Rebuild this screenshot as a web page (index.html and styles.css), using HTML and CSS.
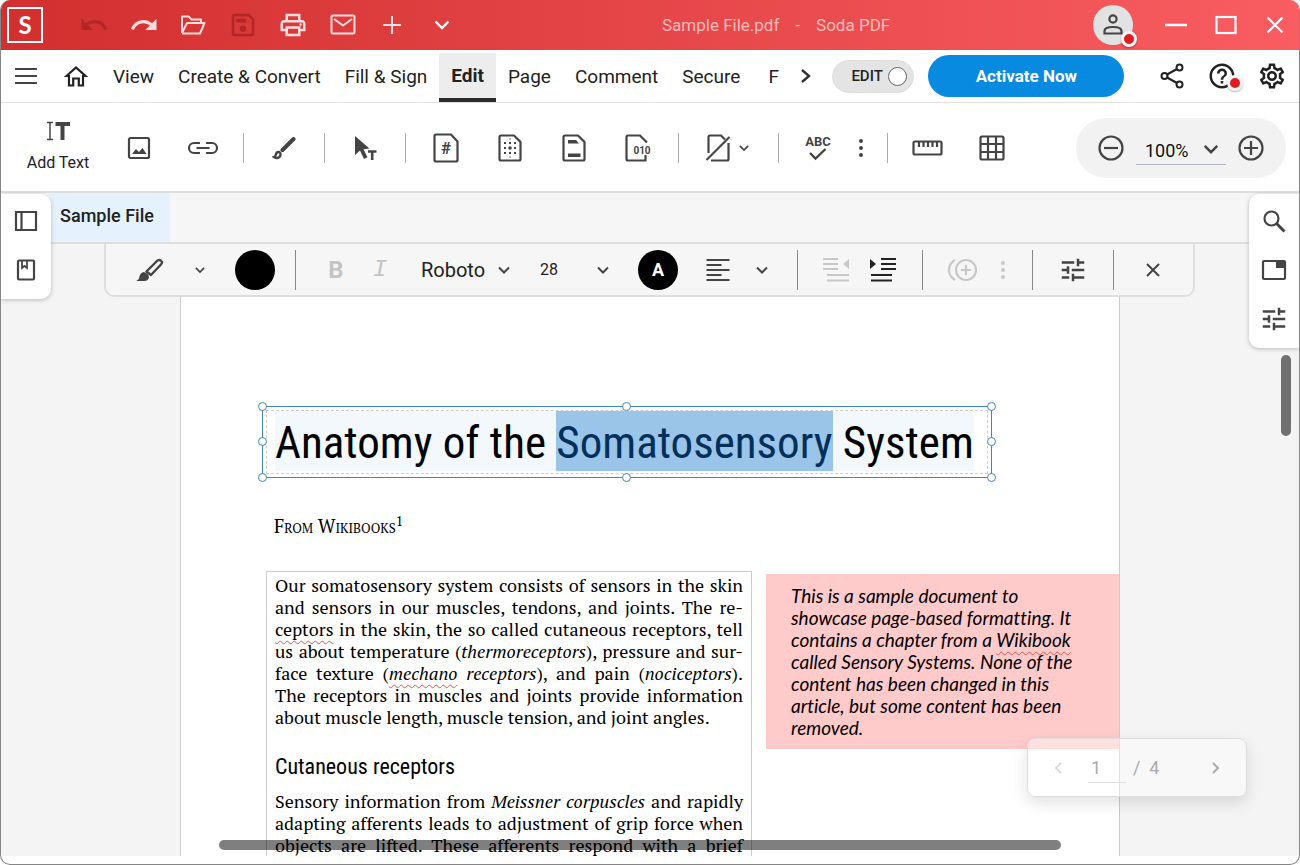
FILE: index.html
```html
<!DOCTYPE html>
<html lang="en">
<head>
<meta charset="utf-8">
<title>Sample File.pdf - Soda PDF</title>
<link rel="stylesheet" href="styles.css">
</head>
<body>
<svg class="sprite" aria-hidden="true">
  <symbol id="chevron" viewBox="0 0 12 8"><path d="M1 1.5 6 6.5l5-5" fill="none" stroke="currentColor" stroke-width="2"/></symbol>
  <symbol id="tune" viewBox="0 0 24 24"><path fill="currentColor" d="M3 17v2h6v-2H3zM3 5v2h10V5H3zm10 16v-2h8v-2h-8v-2h-2v6h2zM7 9v2H3v2h4v2h2V9H7zm14 4v-2H11v2h10zm-6-4h2V7h4V5h-4V3h-2v6z"/></symbol>
  <symbol id="dots" viewBox="0 0 6 20"><g fill="currentColor"><circle cx="3" cy="3" r="2"/><circle cx="3" cy="10" r="2"/><circle cx="3" cy="17" r="2"/></g></symbol>
</svg>
<div class="window">
  <header class="titlebar">
    <div class="logo">S</div>
    <div class="quick">
      <button class="icon-btn dim" aria-label="Undo"><svg width="30" height="30" viewBox="0 0 24 24"><path fill="currentColor" d="M12.5 8c-2.65 0-5.05.99-6.9 2.6L2 7v9h9l-3.62-3.62c1.39-1.16 3.16-1.88 5.12-1.88 3.54 0 6.55 2.31 7.6 5.5l2.37-.78C21.08 11.03 17.15 8 12.5 8z"/></svg></button>
      <button class="icon-btn" aria-label="Redo"><svg width="30" height="30" viewBox="0 0 24 24"><path fill="currentColor" d="M18.4 10.6C16.55 8.99 14.15 8 11.5 8c-4.65 0-8.58 3.03-9.96 7.22L3.9 16c1.05-3.19 4.05-5.5 7.6-5.5 1.95 0 3.73.72 5.12 1.88L13 16h9V7l-3.6 3.6z"/></svg></button>
      <button class="icon-btn" aria-label="Open"><svg width="26" height="20" viewBox="0 0 26 20"><path fill="none" stroke="currentColor" stroke-width="2" stroke-linejoin="round" d="M2 18V1.500h6.500l3 3H21V8M2 18 7 8h17.500l-4.500 10.500H2"/></svg></button>
      <button class="icon-btn dim" aria-label="Save"><svg width="30" height="30" viewBox="0 0 24 24"><path fill="currentColor" d="M17 3H5c-1.110 0-2 .9-2 2v14c0 1.100.89 2 2 2h14c1.100 0 2-.9 2-2V7l-4-4zm2 16H5V5h11.170L19 7.830V19zM6.500 7h8v3h-8z"/><circle cx="12" cy="15" r="2.600" fill="currentColor"/></svg></button>
      <button class="icon-btn" aria-label="Print"><svg width="30" height="30" viewBox="0 0 24 24"><path fill="currentColor" d="M19 8h-1V3H6v5H5c-1.660 0-3 1.340-3 3v6h4v4h12v-4h4v-6c0-1.660-1.340-3-3-3zM8 5h8v3H8V5zm8 12v2H8v-4h8v2zm2-2v-2H6v2H4v-4c0-.55.45-1 1-1h14c.55 0 1 .45 1 1v4h-2z"/><circle cx="18" cy="11.500" r="1" fill="currentColor"/></svg></button>
      <button class="icon-btn" aria-label="Mail"><svg width="26" height="22" viewBox="0 0 26 22"><g fill="none" stroke="currentColor" stroke-width="2"><rect x="1.500" y="1.500" width="23" height="18" rx="1.500"/><path d="m4 5 9 6.500L22 5"/></g></svg></button>
      <button class="icon-btn" aria-label="Add"><svg width="20" height="20" viewBox="0 0 20 20"><path d="M10 1v18M1 10h18" stroke="currentColor" stroke-width="2"/></svg></button>
      <button class="icon-btn bright" aria-label="More"><svg width="16" height="10" viewBox="0 0 16 10"><path d="m1.500 1.500 6.500 6.500 6.500-6.500" fill="none" stroke="currentColor" stroke-width="2.400"/></svg></button>
    </div>
    <div class="doc-title"><span>Sample File.pdf</span><span>-</span><span>Soda PDF</span></div>
    <div class="window-controls">
      <button class="avatar" aria-label="Account"><svg width="20" height="24" viewBox="0 0 20 24"><g fill="none" stroke="#444" stroke-width="2.200"><circle cx="10" cy="6" r="3.600"/><path d="M1.500 20.500v-2.500c0-2.500 3-4 8.500-4s8.500 1.500 8.500 4v2.500z"/></g></svg><span class="badge"></span></button>
      <button class="icon-btn bright" aria-label="Minimize"><svg width="24" height="20" viewBox="0 0 24 20"><path d="M1 10h22" stroke="currentColor" stroke-width="2.500"/></svg></button>
      <button class="icon-btn bright" aria-label="Maximize"><svg width="22" height="20" viewBox="0 0 22 20"><rect x="1.500" y="2" width="19" height="16" fill="none" stroke="currentColor" stroke-width="2.200"/></svg></button>
      <button class="icon-btn bright" aria-label="Close"><svg width="18" height="18" viewBox="0 0 18 18"><path d="m1.500 1.500 15 15m0-15-15 15" stroke="currentColor" stroke-width="2.200"/></svg></button>
    </div>
  </header>

  <nav class="menubar">
    <button class="menu-icon" aria-label="Menu"><svg width="24" height="18" viewBox="0 0 24 18"><path d="M1 2h22M1 9h22M1 16h22" stroke="currentColor" stroke-width="2"/></svg></button>
    <button class="menu-icon" aria-label="Home"><svg width="24" height="24" viewBox="0 0 24 24"><path d="M2.500 12 12 3.500l9.500 8.500H19v9.500h-4.200v-7H9.200v7H5V12z" fill="none" stroke="#222" stroke-width="2.200"/></svg></button>
    <button class="menu">View</button>
    <button class="menu">Create &amp; Convert</button>
    <button class="menu">Fill &amp; Sign</button>
    <button class="menu active">Edit</button>
    <button class="menu">Page</button>
    <button class="menu">Comment</button>
    <button class="menu">Secure</button>
    <button class="menu clipped">F</button>
    <button class="menu-next" aria-label="More tabs"><svg width="12" height="18" viewBox="0 0 12 18"><path d="m2 3 7 6-7 6" fill="none" stroke="#333" stroke-width="2.400"/></svg></button>
    <label class="toggle"><span>EDIT</span><input type="checkbox"></label>
    <button class="activate">Activate Now</button>
    <div class="menu-tools">
      <button class="icon-btn" aria-label="Share"><svg width="24" height="26" viewBox="0 0 24 26"><g fill="none" stroke="currentColor" stroke-width="2"><circle cx="19.500" cy="4.500" r="3"/><circle cx="4.500" cy="13" r="3"/><circle cx="19.500" cy="21.500" r="3"/><path d="m7 11.500 10-5.500M7 14.500 17 20"/></g></svg></button>
      <button class="icon-btn help" aria-label="Help"><svg width="30" height="30" viewBox="0 0 24 24"><path fill="currentColor" d="M11 18h2v-2h-2v2zm1-16C6.480 2 2 6.480 2 12s4.480 10 10 10 10-4.480 10-10S17.520 2 12 2zm0 18c-4.410 0-8-3.590-8-8s3.590-8 8-8 8 3.590 8 8-3.590 8-8 8zm0-14c-2.210 0-4 1.790-4 4h2c0-1.100.9-2 2-2s2 .9 2 2c0 2-3 1.750-3 5h2c0-2.250 3-2.500 3-5 0-2.210-1.790-4-4-4z"/></svg><span class="badge"></span></button>
      <button class="icon-btn" aria-label="Settings"><svg width="30" height="30" viewBox="0 0 24 24"><path fill="currentColor" d="M19.430 12.980c.04-.32.07-.64.07-.98 0-.34-.03-.66-.07-.98l2.110-1.650c.19-.15.24-.42.12-.64l-2-3.460c-.09-.16-.26-.25-.44-.25-.06 0-.12.01-.17.03l-2.490 1c-.52-.4-1.080-.73-1.690-.98l-.38-2.650C14.460 2.180 14.250 2 14 2h-4c-.25 0-.46.18-.49.42l-.38 2.650c-.61.25-1.170.59-1.690.98l-2.490-1c-.06-.02-.12-.03-.18-.03-.17 0-.34.09-.43.25l-2 3.460c-.13.22-.07.49.12.64l2.110 1.650c-.04.32-.07.65-.07.98 0 .33.03.66.07.98l-2.110 1.650c-.19.15-.24.42-.12.64l2 3.460c.09.16.26.25.44.25.06 0 .12-.01.17-.03l2.490-1c.52.4 1.080.73 1.690.98l.38 2.650c.03.24.24.42.49.42h4c.25 0 .46-.18.49-.42l.38-2.650c.61-.25 1.170-.59 1.690-.98l2.490 1c.06.02.12.03.18.03.17 0 .34-.09.43-.25l2-3.460c.12-.22.07-.49-.12-.64l-2.110-1.650zm-1.980-1.710c.04.31.05.52.05.73 0 .21-.02.43-.05.73l-.14 1.130.89.7 1.080.84-.7 1.210-1.270-.51-1.040-.42-.9.68c-.43.32-.84.56-1.250.73l-1.060.43-.16 1.130-.2 1.350h-1.400l-.19-1.350-.16-1.130-1.060-.43c-.43-.18-.83-.41-1.230-.71l-.91-.7-1.060.43-1.270.51-.7-1.210 1.080-.84.89-.7-.14-1.130c-.03-.31-.05-.54-.05-.74s.02-.43.05-.73l.14-1.130-.89-.7-1.080-.84.7-1.210 1.270.51 1.040.42.9-.68c.43-.32.84-.56 1.250-.73l1.060-.43.16-1.130.2-1.350h1.390l.19 1.350.16 1.130 1.060.43c.43.18.83.41 1.230.71l.91.7 1.060-.43 1.270-.51.7 1.210-1.070.85-.89.7.14 1.130zM12 8c-2.210 0-4 1.790-4 4s1.790 4 4 4 4-1.790 4-4-1.790-4-4-4zm0 6c-1.100 0-2-.9-2-2s.9-2 2-2 2 .9 2 2-.9 2-2 2z"/></svg></button>
    </div>
  </nav>

  <div class="ribbon">
    <button class="add-text"><svg width="24" height="20" viewBox="0 0 24 20" fill="none" stroke="currentColor"><path d="M1 1.500h6M1 18.500h6M4 1.500v17" stroke-width="1.500"/><path d="M9.500 3H24M16.500 3v16" stroke-width="4"/></svg><span>Add Text</span></button>
    <button class="tool" aria-label="Image"><svg width="24" height="24" viewBox="0 0 24 24"><rect x="2" y="2" width="20" height="20" rx="1.500" fill="none" stroke="currentColor" stroke-width="2.200"/><path fill="currentColor" d="m5 18 4-5 3 3 3.500-4L19.500 18z"/></svg></button>
    <button class="tool" aria-label="Link"><svg width="32" height="16" viewBox="0 0 32 16"><path d="M13 3H7a5 5 0 0 0 0 10h6M19 3h6a5 5 0 0 1 0 10h-6M9.500 8h13" fill="none" stroke="currentColor" stroke-width="2.200"/></svg></button>
    <span class="sep"></span>
    <button class="tool" aria-label="Brush"><svg width="24" height="24" viewBox="0 0 24 24"><path d="M21.500 3 10.500 14" stroke="currentColor" stroke-width="4" stroke-linecap="round"/><path d="M6.500 16c3 0 2.800 5.500-1.500 6-1.500 0-2.500-.3-3-.8 1.500-.5 1.700-1.500 2-3 .3-1.300 1.200-2.200 2.500-2.200z" fill="none" stroke="currentColor" stroke-width="2.400"/></svg></button>
    <span class="sep"></span>
    <button class="tool" aria-label="Select text"><svg width="24" height="26" viewBox="0 0 24 26"><path d="M2 1v19l5-4.500L11 24l3.500-1.800-4-8 6-.7z" fill="currentColor"/><path d="M15 16.500h8.500M19.200 17v8" stroke="currentColor" stroke-width="2.600"/></svg></button>
    <span class="sep"></span>
    <button class="tool" aria-label="Page number"><svg width="26" height="30" viewBox="0 0 26 30"><path class="ln" d="M3 1.500h15l6.500 7V27q0 1.500-1.500 1.500H3q-1.500 0-1.500-1.500V3q0-1.500 1.500-1.500z"/><text x="13" y="21" font-size="17" font-weight="700" text-anchor="middle">#</text></svg></button>
    <button class="tool" aria-label="Watermark"><svg width="24" height="28" viewBox="0 0 24 28"><path class="ln" d="M3 1.500h13l6.500 6.500V25q0 1.500-1.500 1.500H3q-1.500 0-1.500-1.500V3q0-1.500 1.500-1.500z"/><g stroke="currentColor" stroke-width="2" stroke-dasharray="2 3"><path d="M6 9h13M6 14h13M6 19h13"/></g><circle cx="12" cy="14" r="1.800" fill="currentColor"/><path d="M12 4.500v1M12 22.500v1" stroke="currentColor" stroke-width="1.500"/></svg></button>
    <button class="tool" aria-label="Header and footer"><svg width="24" height="28" viewBox="0 0 24 28"><path class="ln" d="M3 1.500h13l6.500 6.500V25q0 1.500-1.500 1.500H3q-1.500 0-1.500-1.500V3q0-1.500 1.500-1.500z"/><path fill="currentColor" d="M6 6h8l3 3.500H6zM6 19.500h12.500V23H6z"/></svg></button>
    <button class="tool" aria-label="Bates numbering"><svg width="26" height="28" viewBox="0 0 26 28"><path class="ln" d="M22 8.500 15 1.500H3Q1.500 1.500 1.500 3v22q0 1.500 1.500 1.500h17.500V21"/><text x="17" y="19.500" font-size="10" font-weight="700" text-anchor="middle">010</text></svg></button>
    <span class="sep"></span>
    <button class="tool split" aria-label="Remove marks"><svg width="26" height="28" viewBox="0 0 26 28"><path class="ln" d="M3.500 19V3q0-1.500 1.500-1.500h11l4 4M23.500 9v16q0 1.500-1.500 1.500H6"/><path d="m1.500 26 23-23" stroke="currentColor" stroke-width="2.200"/></svg><svg width="10" height="8" viewBox="0 0 12 8"><use href="#chevron"/></svg></button>
    <span class="sep"></span>
    <div class="spell">
      <button class="icon-btn" aria-label="Spell check"><svg width="28" height="28" viewBox="0 0 28 28"><text x="14" y="12" font-size="13" font-weight="700" text-anchor="middle">ABC</text><path d="m6 19 5.500 5.500L21.500 15" fill="none" stroke="currentColor" stroke-width="2.400"/></svg></button>
      <button class="icon-btn" aria-label="More"><svg width="6" height="20"><use href="#dots"/></svg></button>
    </div>
    <span class="sep"></span>
    <button class="tool" aria-label="Ruler"><svg width="32" height="18" viewBox="0 0 32 18"><rect class="ln" x="1.500" y="2.500" width="28" height="13" rx="1.500"/><path class="ln" d="M7 3v5M11.500 3v5M16 3v5M20.500 3v5M25 3v5"/></svg></button>
    <button class="tool" aria-label="Grid"><svg width="26" height="26" viewBox="0 0 26 26"><rect class="ln" x="1.500" y="1.500" width="23" height="23" rx="1.500"/><path class="ln" d="M9 2v22M17 2v22M2 9h22M2 17h22"/></svg></button>
    <div class="zoom">
      <button class="icon-btn" aria-label="Zoom out"><svg width="26" height="26" viewBox="0 0 26 26"><circle class="ln" cx="13" cy="13" r="11.500"/><path class="ln" d="M6 13h14"/></svg></button>
      <label class="zoom-field"><select aria-label="Zoom"><option>100%</option></select><svg width="16" height="10" viewBox="0 0 12 8"><use href="#chevron"/></svg></label>
      <button class="icon-btn" aria-label="Zoom in"><svg width="26" height="26" viewBox="0 0 26 26"><circle class="ln" cx="13" cy="13" r="11.500"/><path class="ln" d="M6 13h14M13 6v14"/></svg></button>
    </div>
  </div>

  <main class="work">
    <div class="tabs"><button class="tab">Sample File</button></div>

    <div class="canvas">
      <article class="page">
        <div class="title-frame">
          <h1><span>Anatomy of the </span><mark>Somatosensory</mark><span> System</span></h1>
          <i class="handle t l"></i><i class="handle t c"></i><i class="handle t r"></i>
          <i class="handle m l"></i><i class="handle m r"></i>
          <i class="handle b l"></i><i class="handle b c"></i><i class="handle b r"></i>
        </div>
        <p class="byline">From Wikibooks<sup>1</sup></p>
        <div class="columns">
          <section class="body-text">
            <p>
              <span>Our somatosensory system consists of sensors in the skin</span>
              <span>and sensors in our muscles, tendons, and joints. The re-</span>
              <span><u>ceptors</u> in the skin, the so called cutaneous receptors, tell</span>
              <span>us about temperature (<em>thermoreceptors</em>), pressure and sur-</span>
              <span>face texture (<em><u>mechano</u> receptors</em>), and pain (<em>nociceptors</em>).</span>
              <span>The receptors in muscles and joints provide information</span>
              <span class="last">about muscle length, muscle tension, and joint angles.</span>
            </p>
            <h2>Cutaneous receptors</h2>
            <p>
              <span>Sensory information from <em>Meissner corpuscles</em> and rapidly</span>
              <span>adapting afferents leads to adjustment of grip force when</span>
              <span>objects are lifted. These afferents respond with a brief</span>
            </p>
          </section>
          <aside class="note">This is a sample document to<br>showcase page-based formatting. It<br>contains a chapter from a <u>Wikibook</u><br>called Sensory Systems. None of the<br>content has been changed in this<br>article, but some content has been<br>removed.</aside>
        </div>
      </article>
      <div class="scroll-x"></div>
      <div class="scroll-y"></div>
      <div class="pager">
        <button class="icon-btn faint" aria-label="Previous page"><svg width="8" height="12" viewBox="0 0 8 12"><path d="M7 1 2 6l5 5" fill="none" stroke="currentColor" stroke-width="2"/></svg></button>
        <input type="text" value="1" aria-label="Page"><span class="total">/ &nbsp;4</span>
        <button class="icon-btn" aria-label="Next page"><svg width="8" height="12" viewBox="0 0 8 12"><path d="m1 1 5 5-5 5" fill="none" stroke="currentColor" stroke-width="2"/></svg></button>
      </div>
      <div class="format">
        <button class="icon-btn" aria-label="Text brush"><svg width="28" height="24" viewBox="0 0 28 24"><path d="m10.500 13.500 11-11q3-1.500 4.500 1.500 0 1.500-1 2.500l-10 10.500z" fill="none" stroke="currentColor" stroke-width="2.400" stroke-linejoin="round"/><path d="M7.500 14q5.500 1 5.500 5.500-1 3.500-5 3.500H0q3-1 3.500-4.500T7.500 14z" fill="currentColor"/></svg></button>
        <button class="icon-btn" aria-label="Brush options"><svg width="10" height="8" viewBox="0 0 12 8"><use href="#chevron"/></svg></button>
        <button class="swatch" aria-label="Fill colour"></button>
        <span class="rule"></span>
        <button class="icon-btn letter bold" aria-label="Bold">B</button>
        <button class="icon-btn letter italic" aria-label="Italic">I</button>
        <label class="field font"><select aria-label="Font"><option>Roboto</option></select><svg width="12" height="8"><use href="#chevron"/></svg></label>
        <label class="field size"><select aria-label="Size"><option>28</option></select><svg width="12" height="8"><use href="#chevron"/></svg></label>
        <button class="swatch" aria-label="Text colour">A</button>
        <button class="icon-btn" aria-label="Align"><svg width="24" height="24" viewBox="0 0 24 24"><path class="ln" d="M.5 2h23M.5 7h15M.5 12h23M.5 17h15M.5 22h23"/></svg></button>
        <button class="icon-btn" aria-label="Align options"><svg width="12" height="8"><use href="#chevron"/></svg></button>
        <span class="rule"></span>
        <button class="icon-btn off" aria-label="Outdent"><svg width="26" height="26" viewBox="0 0 26 26"><path class="ln" d="M0 2h15M0 7h15M0 12h15M4 18h22M4 23.500h22"/><path fill="currentColor" d="M26 2v10l-6-5z"/></svg></button>
        <button class="icon-btn strong" aria-label="Indent"><svg width="26" height="26" viewBox="0 0 26 26"><path class="ln" d="M11 2h15M11 7h15M11 12h15M1 18h21M1 23.500h21"/><path fill="currentColor" d="M0 2v10l6-5z"/></svg></button>
        <span class="rule"></span>
        <button class="icon-btn off" aria-label="Add style"><svg width="32" height="24" viewBox="0 0 32 24"><circle class="ln" cx="20" cy="12" r="10"/><path class="ln" d="M20 7v10M15 12h10M9 2C1 7 1 17 9 22"/></svg></button>
        <button class="icon-btn off" aria-label="More"><svg width="6" height="20"><use href="#dots"/></svg></button>
        <span class="rule"></span>
        <button class="icon-btn" aria-label="Properties"><svg width="30" height="30"><use href="#tune"/></svg></button>
        <span class="rule"></span>
        <button class="icon-btn" aria-label="Close toolbar"><svg width="14" height="14" viewBox="0 0 14 14"><path d="m1 1 12 12m0-12L1 13" stroke="currentColor" stroke-width="2"/></svg></button>
      </div>
    </div>

    <aside class="side side-left">
      <button class="icon-btn" aria-label="Thumbnails"><svg width="24" height="22" viewBox="0 0 24 22"><path class="ln" d="M2 2h20v18H2zM7.500 2v18"/></svg></button>
      <button class="icon-btn" aria-label="Bookmarks"><svg width="20" height="22" viewBox="0 0 20 22"><rect class="ln" x="2" y="1.500" width="16" height="19" rx="1"/><path d="M6 2v7l2.500-2L11 9V2" fill="none" stroke="currentColor" stroke-width="1.800"/></svg></button>
    </aside>
    <aside class="side side-right">
      <button class="icon-btn" aria-label="Search"><svg width="24" height="24" viewBox="0 0 24 24"><circle class="ln" cx="9.500" cy="9.500" r="7"/><path d="m14.500 14.500 8 8" stroke="currentColor" stroke-width="3"/></svg></button>
      <button class="icon-btn" aria-label="Panel"><svg width="26" height="22" viewBox="0 0 26 22"><rect class="ln" x="2" y="2" width="22" height="18" rx="1"/><path fill="currentColor" d="M15 3h9v6h-9z"/></svg></button>
      <button class="icon-btn" aria-label="Properties"><svg width="30" height="30"><use href="#tune"/></svg></button>
    </aside>
  </main>
</div>
</body>
</html>
```

FILE: styles.css
```css
* { box-sizing: border-box; }

body {
  margin: 0;
  font-family: Roboto, "Liberation Sans", sans-serif;
  font-size: 18px;
  color: #222;
  background: #fff;
}

button, select, input {
  margin: 0;
  padding: 0;
  border: 0;
  background: none;
  color: inherit;
  font: inherit;
}

select { appearance: none; }
svg { display: block; flex: none; }
svg text { fill: currentColor; font-family: Roboto, sans-serif; }
h1, h2, p { margin: 0; font-weight: 400; }

.sprite { position: absolute; width: 0; height: 0; }
.ln { fill: none; stroke: currentColor; stroke-width: 2.2; }

.window {
  display: flex;
  flex-direction: column;
  height: 100vh;
  overflow: hidden;
  border: 1px solid #858585;
  border-top: 0;
  border-radius: 10px;
}

.icon-btn {
  display: flex;
  align-items: center;
  justify-content: center;
  color: #444;
}

/* Title bar */
.titlebar {
  display: flex;
  flex: none;
  align-items: center;
  height: 50px;
  padding-bottom: 1px;
  background: linear-gradient(90deg, #d22f2f, #f95d61);
}

.logo {
  width: 36px;
  height: 36px;
  margin-left: 6px;
  border: 2px solid #fff;
  color: #fff;
  font: 700 24px/32px Lato, sans-serif;
  text-align: center;
}

.quick {
  display: flex;
  justify-content: space-between;
  width: 382px;
  margin-left: 34px;
}

.quick .icon-btn { width: 34px; color: #fdd; }
.quick .icon-btn.dim { color: #b12626; }
.quick .icon-btn.bright,
.window-controls .bright { color: #fff; }

.doc-title {
  display: flex;
  gap: 16px;
  margin-left: 203px;
  color: #fbbcbc;
  font-size: 17px;
}

.window-controls {
  display: flex;
  align-items: center;
  margin-left: auto;
  padding-right: 14px;
}

.window-controls .icon-btn { width: 50px; }
.window-controls .icon-btn:last-child { width: 20px; margin-left: 14px; }

.avatar {
  position: relative;
  display: flex;
  align-items: center;
  justify-content: center;
  width: 40px;
  height: 40px;
  margin-right: 18px;
  border-radius: 50%;
  background: #e2e2e2;
}

.badge {
  position: absolute;
  right: -4px;
  bottom: -2px;
  width: 16px;
  height: 16px;
  border: 3px solid #f4f4f4;
  border-radius: 50%;
  background: #e21b22;
  box-shadow: 0 1px 2px rgba(0, 0, 0, .3);
}

/* Menu bar */
.menubar {
  display: flex;
  flex: none;
  align-items: center;
  height: 53px;
  border-bottom: 1px solid #e0e0e0;
}

.menu-icon {
  display: flex;
  justify-content: center;
  width: 50px;
  color: #444;
}

.menu {
  align-self: flex-end;
  height: 49px;
  padding: 0 12px 3px;
  font-size: 19px;
  white-space: nowrap;
}

.menu.active {
  border-bottom: 4px solid #2a2a2a;
  background: #ededed;
  padding-bottom: 0;
  font-weight: 700;
}

.menu.clipped { width: 34px; padding: 0 0 3px 16px; text-align: left; }
.menu-next { display: flex; justify-content: center; width: 40px; }

.toggle {
  display: flex;
  flex: none;
  align-items: center;
  justify-content: space-between;
  width: 82px;
  height: 33px;
  margin-left: 6px;
  padding: 0 6px 0 18px;
  border: 1px solid #ddd;
  border-radius: 17px;
  background: #e4e4e4;
  font-size: 15px;
  font-weight: 500;
}

.toggle input {
  appearance: none;
  width: 19px;
  height: 19px;
  border: 1px solid #666;
  border-radius: 50%;
  background: #fff;
}

.activate {
  flex: none;
  width: 196px;
  height: 42px;
  margin-left: 14px;
  border-radius: 21px;
  background: #078ae0;
  color: #fff;
  font-size: 17px;
  font-weight: 700;
}

.menu-tools {
  display: flex;
  margin-left: auto;
  padding-right: 2px;
}

.menu-tools .icon-btn { position: relative; width: 50px; color: #222; }
.help .badge { right: 4px; bottom: 0; }

/* Ribbon */
.ribbon {
  display: flex;
  flex: none;
  align-items: center;
  height: 90px;
  padding-top: 1px;
  border-bottom: 2px solid #dedede;
  color: #444;
}

.add-text {
  display: flex;
  flex-direction: column;
  align-items: center;
  gap: 12px;
  width: 98px;
  margin-left: 8px;
  padding-bottom: 2px;
  color: #444;
  font-size: 16px;
}

.add-text span { color: #222; }

.tool {
  display: flex;
  flex: none;
  align-items: center;
  justify-content: center;
  width: 64px;
  height: 60px;
}

.tool.split { width: 83px; padding-right: 4px; gap: 8px; }

.sep {
  flex: none;
  width: 1px;
  height: 30px;
  margin: 0 8px;
  background: #aaa;
}

.spell {
  display: flex;
  flex: none;
  justify-content: space-between;
  width: 92px;
  padding: 0 15px 0 17px;
}

.zoom {
  display: flex;
  align-items: center;
  justify-content: space-between;
  width: 210px;
  height: 60px;
  margin: 0 13px 0 auto;
  padding: 0 22px;
  border-radius: 30px;
  background: #f2f2f2;
}

.zoom-field {
  display: grid;
  align-items: center;
  width: 90px;
  height: 34px;
  padding-top: 4px;
  border-bottom: 1px solid #b3b7c4;
  color: #111;
}

.zoom-field > *, .field > * { grid-area: 1 / 1; }
.zoom-field select { padding: 2px 0 0 9px; }
.zoom-field svg { justify-self: end; margin-right: 7px; color: #444; pointer-events: none; }

/* Work area */
.work {
  position: relative;
  display: flex;
  flex: 1;
  flex-direction: column;
  min-height: 0;
  padding-bottom: 8px;
}

.tabs {
  flex: none;
  height: 51px;
  padding-left: 49px;
  border-bottom: 2px solid #dedede;
  background: #f6f6f6;
}

.tab {
  width: 120px;
  height: 49px;
  padding: 0 6px 4px 0;
  background: #e5f2fd;
  font-weight: 500;
}

.side {
  position: absolute;
  top: 1px;
  display: flex;
  flex-direction: column;
  width: 50px;
  padding: 2px 0 5px;
  background: #fff;
  box-shadow: 0 1px 4px rgba(0, 0, 0, .25);
}

.side .icon-btn { height: 49px; }
.side-left { left: 0; border-radius: 0 10px 10px 0; }
.side-right { right: 0; border-radius: 10px 0 0 10px; }

.canvas {
  position: relative;
  flex: 1;
  min-height: 0;
  overflow: hidden;
  background: #f4f4f4;
}

.format {
  position: absolute;
  top: 0;
  left: 103px;
  right: 104px;
  display: grid;
  grid-template-columns: 50px 50px 60px 20px 62px 26px 125px 104px 72px 48px 40px 30px 48px 46px 32px 48px 34px 24px 58px 22px 58px;
  align-items: center;
  justify-items: center;
  height: 53px;
  padding-left: 19px;
  border: 2px solid #dedede;
  border-top: 0;
  border-radius: 0 0 10px 10px;
  background: #f6f6f6;
}

.rule { width: 1px; height: 40px; background: #888; }

.swatch {
  width: 40px;
  height: 40px;
  border-radius: 50%;
  background: #000;
  color: #fff;
  font-weight: 700;
}

.letter { color: #c4c4c4; font-size: 24px; font-weight: 700; }
.letter.italic { font: italic 500 24px "Liberation Mono", monospace; }
.off { color: #c8c8c8; }
.strong { color: #222; }

.field { display: grid; align-items: center; justify-self: stretch; }
.field svg { justify-self: end; color: #444; pointer-events: none; }
.field.font { padding: 0 8px 0 28px; font-size: 20px; }
.field.size { padding: 0 13px 0 22px; font-size: 16px; }

/* Document */
.page {
  width: 940px;
  height: 100%;
  margin: 0 auto;
  padding: 162px 0 0 81px;
  overflow: hidden;
  border: solid #ccc;
  border-width: 0 1px;
  background: #fff;
  color: #000;
}

.title-frame {
  position: relative;
  width: 730px;
  padding: 3px;
  border: 1px solid #3f87b8;
}

h1 {
  padding: 0 8px 2px;
  border: 1px dashed #ccc;
  font: 400 45px/56px "Roboto Condensed", "Liberation Sans Narrow", Roboto, sans-serif;
  white-space: pre;
}

h1 span, h1 mark { display: inline-block; padding-top: 4px; vertical-align: top; background: #f3f8fd; }
h1 mark { background: #9ac4e8; color: #02305a; }

.handle {
  position: absolute;
  width: 9px;
  height: 9px;
  margin: -5px;
  border: 1px solid #3f87b8;
  border-radius: 50%;
  background: #fff;
}

.handle.t { top: 0; }
.handle.m { top: 50%; }
.handle.b { bottom: 0; }
.handle.l { left: 0; }
.handle.c { left: 50%; }
.handle.r { right: 0; }

.byline {
  margin: 34px 0 0 12px;
  font: 19px/28px "PT Serif", "Liberation Serif", serif;
  font-variant-caps: small-caps;
}

.byline sup { font-size: 14px; line-height: 0; }

.columns {
  display: flex;
  align-items: flex-start;
  gap: 14px;
  margin: 31px 0 0 4px;
}

.body-text {
  flex: none;
  width: 486px;
  height: 320px;
  padding: 2px 8px;
  border: 1px solid #ccc;
  font: 18px/22px "PT Serif", "Liberation Serif", serif;
}

.body-text span { display: block; text-align-last: justify; white-space: nowrap; }
.body-text .last { text-align-last: left; }

.body-text h2 {
  margin: 26px 0 10px;
  font: 400 22px/26px "Roboto Condensed", "Liberation Sans Narrow", Roboto, sans-serif;
}

u {
  text-decoration: underline wavy #e0564f 1px;
  text-decoration-skip-ink: none;
  text-underline-offset: 4px;
}

.note {
  flex: 1;
  margin-top: 3px;
  padding: 11px 0 10px 25px;
  background: #ffcaca;
  font: italic 19px/22px Lato, sans-serif;
  font-variant-ligatures: none;
  white-space: nowrap;
}

.scroll-x {
  position: absolute;
  left: 218px;
  right: 238px;
  bottom: 6px;
  height: 10px;
  border-radius: 5px;
  background: rgba(0, 0, 0, .5);
}

.scroll-y {
  position: absolute;
  right: 8px;
  top: 111px;
  width: 10px;
  height: 81px;
  border-radius: 5px;
  background: #707070;
}

.pager {
  position: absolute;
  right: 52px;
  bottom: 59px;
  display: flex;
  align-items: center;
  width: 220px;
  height: 59px;
  padding: 0 26px;
  border: 1px solid #ddd;
  border-radius: 8px;
  background: rgba(255, 255, 255, .4);
  box-shadow: 0 6px 16px rgba(0, 0, 0, .12);
  color: #aaa;
}

.pager .icon-btn { color: #aaa; }
.pager .faint { color: #ddd; }
.pager input { width: 38px; height: 30px; margin-left: 26px; padding-left: 3px; border-bottom: 1px solid #ddd; }
.total { margin: 0 auto 0 7px; }
```
